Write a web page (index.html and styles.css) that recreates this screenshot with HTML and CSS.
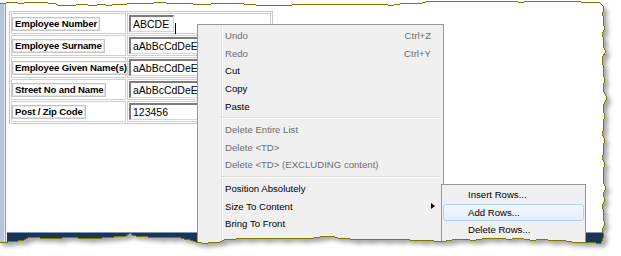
FILE: index.html
```html
<!DOCTYPE html>
<html lang="en">
<head>
    <meta charset="UTF-8">
    <title>Form designer - context menu</title>
    <link rel="stylesheet" href="styles.css">
</head>
<body>

<div class="shot">
    <div class="frame-edge"></div>
    <div class="workspace">
        <div class="canvas">
            <table class="form-table">
                <tr>
                    <td class="label-cell"><div class="cell-in"><span class="label">Employee Number</span></div></td>
                    <td class="input-cell"><div class="cell-in"><span class="field field-short">ABCDE</span><span class="caret"></span></div></td>
                </tr>
                <tr>
                    <td class="label-cell"><div class="cell-in"><span class="label">Employee Surname</span></div></td>
                    <td class="input-cell"><div class="cell-in"><span class="field field-long">aAbBcCdDeEfFgG</span></div></td>
                </tr>
                <tr>
                    <td class="label-cell"><div class="cell-in"><span class="label">Employee Given Name(s)</span></div></td>
                    <td class="input-cell"><div class="cell-in"><span class="field field-long">aAbBcCdDeEfFgG</span></div></td>
                </tr>
                <tr>
                    <td class="label-cell"><div class="cell-in"><span class="label">Street No and Name</span></div></td>
                    <td class="input-cell"><div class="cell-in"><span class="field field-long">aAbBcCdDeEfFgG</span></div></td>
                </tr>
                <tr>
                    <td class="label-cell"><div class="cell-in"><span class="label">Post / Zip Code</span></div></td>
                    <td class="input-cell"><div class="cell-in"><span class="field field-long">123456</span></div></td>
                </tr>
            </table>
        </div>
        <div class="statusbar"></div>
    </div>

    <!-- context menu over the designer -->
    <div class="menu">
        <div class="item off"><span>Undo</span><span>Ctrl+Z</span></div>
        <div class="item off"><span>Redo</span><span>Ctrl+Y</span></div>
        <div class="item"><span>Cut</span></div>
        <div class="item"><span>Copy</span></div>
        <div class="item"><span>Paste</span></div>
        <div class="sep"></div>
        <div class="item off"><span>Delete Entire List</span></div>
        <div class="item off"><span>Delete &lt;TD&gt;</span></div>
        <div class="item off"><span>Delete &lt;TD&gt; (EXCLUDING content)</span></div>
        <div class="sep"></div>
        <div class="item"><span>Position Absolutely</span></div>
        <div class="item"><span>Size To Content</span><span class="arrow"></span></div>
        <div class="item"><span>Bring To Front</span></div>
        <div class="item"><span>Send To Back</span></div>
    </div>

    <div class="submenu">
        <div class="item"><span>Insert Rows...</span></div>
        <div class="item hot"><span>Add Rows...</span></div>
        <div class="item"><span>Delete Rows...</span></div>
    </div>

    <!-- torn paper edge -->
    <svg class="torn" width="621" height="256" viewBox="0 0 621 256">
        <defs>
            <clipPath id="outside">
                <path clip-rule="evenodd" d="M-5 -5H630V265H-5Z M-2 3 L0 3 6 3 12 2 18 3 24 3 30 2 36 3 42 2 48 3 54 3 58 5 64 6 70 5 76 5 82 4 88 5 94 6 100 4 106 5 112 5 118 4 124 5 130 3 136 4 142 3 148 4 154 3 160 2 166 3 172 4 178 3 184 4 190 3 196 5 202 4 208 5 214 3 220 4 226 3 232 4 238 3 244 4 250 4 256 5 262 6 268 5 274 6 280 5 286 6 292 5 298 4 304 5 310 4 316 5 322 4 328 5 334 4 340 5 346 4 352 5 358 4 364 5 370 4 376 5 382 4 388 5 394 5 400 4 404 3 410 3 416 3 422 3 426 2 428 1 434 2 440 1 446 2 452 1 458 2 464 1 470 2 476 1 482 2 488 1 494 2 500 1 506 2 512 1 518 2 524 2 530 1 536 2 542 1 548 2 554 1 560 2 566 1 572 2 578 1 584 3 590 2 596 2 600 3 603 6 604 10 602 14 604 18 603 24 605 28 602 34 604 40 603 46 606 52 603 56 602 62 604 68 603 74 605 80 603 86 604 92 607 98 604 104 603 110 605 116 603 122 604 128 602 134 605 140 603 146 604 152 602 158 605 164 603 170 604 176 603 182 606 188 603 194 605 200 602 206 604 212 603 218 605 224 602 230 604 236 601 243 596 243 590 242 584 243 578 242 572 242 566 241 560 240 554 241 548 240 542 239 536 240 530 240 524 239 518 238 512 239 506 239 500 238 494 239 488 238 482 239 476 240 470 240 464 239 458 239 452 240 446 241 440 241 434 241 428 240 422 241 416 240 410 240 404 239 398 240 392 239 386 240 380 239 374 239 368 240 362 239 356 240 350 239 344 238 338 238 332 236 326 236 320 237 314 238 308 238 302 239 296 238 290 238 284 239 278 238 272 238 266 239 260 238 254 238 248 239 242 238 236 239 230 239 224 240 220 242 214 242 208 243 202 243 196 242 190 240 184 239 178 237 172 238 166 237 160 238 154 237 148 237 142 236 136 236 132 235 131 233 129 234 126 236 120 236 114 237 108 237 102 238 96 238 90 239 84 238 78 238 72 237 66 237 62 238 58 239 52 238 46 238 40 238 34 237 28 238 24 240 18 241 12 241 8 242 0 242 -2 242Z"/>
            </clipPath>
            <filter id="blur" x="-5%" y="-5%" width="110%" height="110%">
                <feGaussianBlur stdDeviation="2.2"/>
            </filter>
            <path id="edge" d="M-2 3 L0 3 6 3 12 2 18 3 24 3 30 2 36 3 42 2 48 3 54 3 58 5 64 6 70 5 76 5 82 4 88 5 94 6 100 4 106 5 112 5 118 4 124 5 130 3 136 4 142 3 148 4 154 3 160 2 166 3 172 4 178 3 184 4 190 3 196 5 202 4 208 5 214 3 220 4 226 3 232 4 238 3 244 4 250 4 256 5 262 6 268 5 274 6 280 5 286 6 292 5 298 4 304 5 310 4 316 5 322 4 328 5 334 4 340 5 346 4 352 5 358 4 364 5 370 4 376 5 382 4 388 5 394 5 400 4 404 3 410 3 416 3 422 3 426 2 428 1 434 2 440 1 446 2 452 1 458 2 464 1 470 2 476 1 482 2 488 1 494 2 500 1 506 2 512 1 518 2 524 2 530 1 536 2 542 1 548 2 554 1 560 2 566 1 572 2 578 1 584 3 590 2 596 2 600 3 603 6 604 10 602 14 604 18 603 24 605 28 602 34 604 40 603 46 606 52 603 56 602 62 604 68 603 74 605 80 603 86 604 92 607 98 604 104 603 110 605 116 603 122 604 128 602 134 605 140 603 146 604 152 602 158 605 164 603 170 604 176 603 182 606 188 603 194 605 200 602 206 604 212 603 218 605 224 602 230 604 236 601 243 596 243 590 242 584 243 578 242 572 242 566 241 560 240 554 241 548 240 542 239 536 240 530 240 524 239 518 238 512 239 506 239 500 238 494 239 488 238 482 239 476 240 470 240 464 239 458 239 452 240 446 241 440 241 434 241 428 240 422 241 416 240 410 240 404 239 398 240 392 239 386 240 380 239 374 239 368 240 362 239 356 240 350 239 344 238 338 238 332 236 326 236 320 237 314 238 308 238 302 239 296 238 290 238 284 239 278 238 272 238 266 239 260 238 254 238 248 239 242 238 236 239 230 239 224 240 220 242 214 242 208 243 202 243 196 242 190 240 184 239 178 237 172 238 166 237 160 238 154 237 148 237 142 236 136 236 132 235 131 233 129 234 126 236 120 236 114 237 108 237 102 238 96 238 90 239 84 238 78 238 72 237 66 237 62 238 58 239 52 238 46 238 40 238 34 237 28 238 24 240 18 241 12 241 8 242 0 242 -2 242"/>
        </defs>
        <rect x="-5" y="-5" width="640" height="270" fill="#fff" clip-path="url(#outside)"/>
        <g clip-path="url(#outside)">
            <use href="#edge" fill="#8a8a8a" opacity="0.75" transform="translate(4 4)" filter="url(#blur)"/>
        </g>
        <use href="#edge" fill="none" stroke="#7d7a00" stroke-width="1" shape-rendering="crispEdges"/>
    </svg>
</div>

</body>
</html>
```

FILE: styles.css
```css
body {
    margin: 0;
    background: #fff;
    font-family: "Liberation Sans", Arial, sans-serif;
}
.shot {
    position: relative;
    width: 621px;
    height: 256px;
    overflow: hidden;
    display: flex;
}
.frame-edge {
    width: 7px;
    background: linear-gradient(to right, #b6c6d8 0 4px, #dbe4ee 4px 5px, #98a4b2 5px 6px, #eef2f6 6px 7px);
}
.workspace {
    flex: 1;
    display: flex;
    flex-direction: column;
}
.canvas {
    height: 232px;
    box-sizing: border-box;
    padding: 11px 0 0 2px;
    background: #fff;
}
.statusbar {
    flex: 1;
    background: #1b3556;
    border-top: 1px solid #7f97b6;
}

.form-table {
    border: 1px solid #c9c9c9;
    border-spacing: 1px;
}
.form-table td {
    border: 1px solid #cfcfcf;
    padding: 0;
}
.form-table td.input-cell {
    padding-left: 1px;
}
.cell-in {
    height: 19px;
    display: flex;
    align-items: center;
}
.label-cell .cell-in {
    width: 113px;
}
.input-cell .cell-in {
    width: 141px;
}
.label {
    display: inline-block;
    box-sizing: border-box;
    height: 14px;
    padding: 0 2px;
    border: 1px solid #c4c4c4;
    box-shadow: inset 1px 1px 0 #ececec, inset -1px -1px 0 #e2e2e2;
    font-size: 9.6px;
    font-weight: bold;
    letter-spacing: -0.15px;
    line-height: 12px;
    color: #000;
    white-space: nowrap;
}
.field {
    display: inline-block;
    box-sizing: border-box;
    height: 17px;
    padding-left: 2px;
    border-style: solid;
    border-width: 2px 1px 1px 2px;
    border-color: #7c7c7c #d6d6d6 #d6d6d6 #7c7c7c;
    font-size: 10.5px;
    line-height: 14px;
    color: #000;
    white-space: nowrap;
    overflow: hidden;
}
.field-short {
    width: 45px;
}
.field-long {
    width: 138px;
}
.caret {
    width: 1px;
    height: 11px;
    margin: 10px 0 0 1px;
    background: #000;
}

.menu, .submenu {
    position: absolute;
    box-sizing: border-box;
    border: 1px solid #979797;
    background: #f0f0f0;
    font-size: 9.6px;
    color: #000;
}
.menu {
    left: 197px;
    top: 24px;
    width: 247px;
    height: 240px;
    padding: 2px;
}
.menu::before {
    content: "";
    position: absolute;
    left: 23px;
    top: 2px;
    bottom: 2px;
    width: 1px;
    background: #e2e3e3;
    box-shadow: 1px 0 0 #fff;
}
.item {
    position: relative;
    display: flex;
    justify-content: space-between;
    align-items: center;
    height: 17.6px;
    padding: 0 10px 0 25px;
    white-space: nowrap;
}
.item.off {
    color: #6d6d6d;
}
.sep {
    position: relative;
    height: 6px;
    margin-left: 21px;
}
.sep::after {
    content: "";
    position: absolute;
    left: 0;
    right: 1px;
    top: 2px;
    border-top: 1px solid #e0e0e0;
    border-bottom: 1px solid #fff;
}
.arrow {
    width: 0;
    height: 0;
    margin-right: -4px;
    border-left: 4px solid #000;
    border-top: 3.5px solid transparent;
    border-bottom: 3.5px solid transparent;
}
.submenu {
    left: 441px;
    top: 184px;
    width: 145px;
    height: 80px;
    padding: 1px;
}
.item.hot {
    box-sizing: border-box;
    padding-left: 24px;
    border: 1px solid #aecff7;
    border-radius: 3px;
    background: linear-gradient(#f4f8fd, #e3edfb);
}

.torn {
    position: absolute;
    left: 0;
    top: 0;
    pointer-events: none;
}
```
